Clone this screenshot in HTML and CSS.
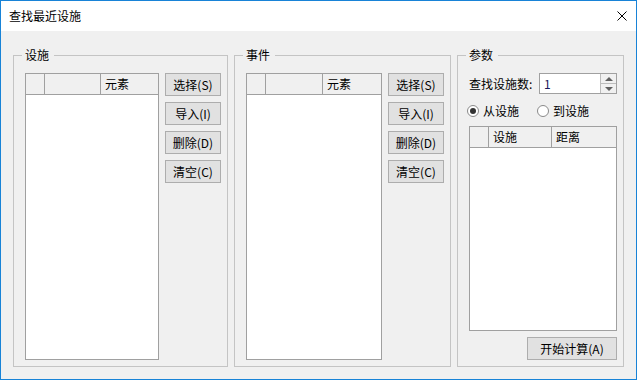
FILE: index.html
```html
<!DOCTYPE html>
<html lang="zh-CN">
<head>
  <meta charset="UTF-8">
  <title>查找最近设施</title>
  <link rel="stylesheet" href="styles.css">
</head>
<body>
  <div class="window">
    <div class="titlebar">
      <span class="title">查找最近设施</span>
      <button class="close" title="关闭">
        <svg width="10" height="10" viewBox="0 0 10 10"><path d="M0.5 0.5 L9.5 9.5 M9.5 0.5 L0.5 9.5" stroke="#000" stroke-width="1" fill="none"/></svg>
      </button>
    </div>

    <div class="content">
      <fieldset class="group group-facility">
        <legend>设施</legend>
        <div class="pane">
          <div class="grid">
            <div class="grid-head">
              <span class="col col-mark"></span>
              <span class="col col-blank"></span>
              <span class="col col-last">元素</span>
            </div>
            <div class="grid-body"></div>
          </div>
          <div class="actions">
            <button class="btn">选择(S)</button>
            <button class="btn">导入(I)</button>
            <button class="btn">删除(D)</button>
            <button class="btn">清空(C)</button>
          </div>
        </div>
      </fieldset>

      <fieldset class="group group-event">
        <legend>事件</legend>
        <div class="pane">
          <div class="grid">
            <div class="grid-head">
              <span class="col col-mark"></span>
              <span class="col col-blank wide"></span>
              <span class="col col-last">元素</span>
            </div>
            <div class="grid-body"></div>
          </div>
          <div class="actions">
            <button class="btn">选择(S)</button>
            <button class="btn">导入(I)</button>
            <button class="btn">删除(D)</button>
            <button class="btn">清空(C)</button>
          </div>
        </div>
      </fieldset>

      <fieldset class="group group-params">
        <legend>参数</legend>
        <div class="params">
          <div class="count-row">
            <span>查找设施数:</span>
            <div class="spin">
              <span class="spin-value">1</span>
              <div class="spin-buttons">
                <span class="spin-up"><i class="arrow-up"></i></span>
                <span class="spin-down"><i class="arrow-down"></i></span>
              </div>
            </div>
          </div>
          <div class="radio-row">
            <label class="radio"><span class="radio-dot checked"></span>从设施</label>
            <label class="radio"><span class="radio-dot"></span>到设施</label>
          </div>
          <div class="grid result">
            <div class="grid-head">
              <span class="col col-mark"></span>
              <span class="col col-facility">设施</span>
              <span class="col col-last">距离</span>
            </div>
            <div class="grid-body"></div>
          </div>
          <div class="run-row">
            <button class="btn run">开始计算(A)</button>
          </div>
        </div>
      </fieldset>
    </div>
  </div>
</body>
</html>
```

FILE: styles.css
```css
* {
  box-sizing: border-box;
}

body {
  margin: 0;
  font-family: "Noto Sans CJK SC", "Microsoft YaHei", sans-serif;
  font-size: 12px;
  color: #000;
}

.window {
  width: 637px;
  height: 380px;
  border: 1px solid #1883d7;
  background: #f0f0f0;
  display: flex;
  flex-direction: column;
}

.titlebar {
  height: 30px;
  background: #fff;
  display: flex;
  align-items: center;
  padding-left: 8px;
}

.title {
  line-height: 16px;
}

.close {
  margin-left: auto;
  margin-right: 9px;
  width: 10px;
  height: 10px;
  padding: 0;
  border: none;
  background: none;
  display: flex;
}

.content {
  flex: 1;
  display: flex;
  gap: 6px;
  padding: 16px 12px 12px 12px;
}

.group {
  margin: 0;
  min-width: 0;
  border: 1px solid #c4c4c4;
  padding: 10px 6px 6px 11px;
  display: flex;
  flex-direction: column;
}

.group legend {
  padding: 0 5px 0 3px;
  margin-left: -3px;
  line-height: 16px;
}

.group-facility {
  flex: 0 0 215px;
}

.group-event {
  flex: 0 0 217px;
}

.group-params {
  flex: 0 0 167px;
}

.pane {
  flex: 1;
  display: flex;
  gap: 6px;
}

.grid {
  flex: 1;
  display: flex;
  flex-direction: column;
  border: 1px solid #a0a0a0;
  background: #fff;
}

.grid-head {
  height: 21px;
  display: flex;
  background: #f0f0f0;
  border-bottom: 1px solid #a0a0a0;
}

.col {
  line-height: 20px;
  padding-left: 4px;
  border-right: 1px solid #a0a0a0;
}

.col-mark {
  width: 19px;
}

.col-blank {
  width: 56px;
}

.col-blank.wide {
  width: 57px;
}

.col-facility {
  width: 63px;
}

.col-last {
  flex: 1;
  border-right: none;
}

.grid-body {
  flex: 1;
}

.actions {
  width: 56px;
  display: flex;
  flex-direction: column;
  gap: 6px;
}

.btn {
  height: 23px;
  padding: 0;
  border: 1px solid #adadad;
  background: #e1e1e1;
  font: inherit;
  line-height: 21px;
  color: #000;
}

.params {
  flex: 1;
  display: flex;
  flex-direction: column;
}

.count-row {
  height: 21px;
  display: flex;
  align-items: center;
  margin-bottom: 8px;
}

.spin {
  margin-left: auto;
  width: 78px;
  height: 21px;
  display: flex;
  border: 1px solid #a0a0a0;
  background: #fff;
}

.spin-value {
  flex: 1;
  padding-left: 4px;
  line-height: 19px;
  color: #1a1a5a;
}

.spin-buttons {
  width: 16px;
  display: flex;
  flex-direction: column;
  border-left: 1px solid #bcbcbc;
  background: #f0f0f0;
}

.spin-up,
.spin-down {
  flex: 1;
  display: flex;
  align-items: center;
  justify-content: center;
}

.spin-up {
  border-bottom: 1px solid #bcbcbc;
}

.arrow-up {
  border-left: 4px solid transparent;
  border-right: 4px solid transparent;
  border-bottom: 4px solid #606060;
}

.arrow-down {
  border-left: 4px solid transparent;
  border-right: 4px solid transparent;
  border-top: 4px solid #606060;
}

.radio-row {
  height: 17px;
  display: flex;
  align-items: center;
  gap: 18px;
  margin-left: -2px;
  margin-bottom: 7px;
}

.radio {
  display: flex;
  align-items: center;
  gap: 4px;
  line-height: 16px;
}

.radio-dot {
  width: 12px;
  height: 12px;
  border: 1px solid #8a8a8a;
  border-radius: 50%;
  background: #fff;
  display: flex;
  align-items: center;
  justify-content: center;
}

.radio-dot.checked::after {
  content: "";
  width: 6px;
  height: 6px;
  border-radius: 50%;
  background: #333;
}

.result {
  flex: 1;
}

.run-row {
  display: flex;
  justify-content: flex-end;
  margin-top: 6px;
}

.run {
  width: 90px;
}
```
